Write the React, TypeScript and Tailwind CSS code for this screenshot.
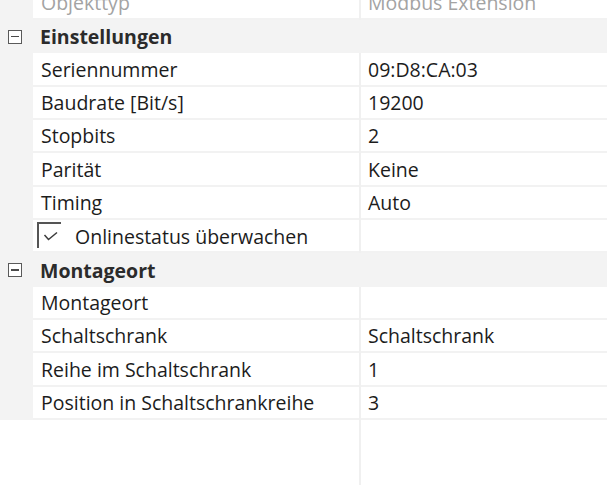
type Row =
  | { kind: 'category'; title: string }
  | { kind: 'prop'; label: string; value?: string; muted?: boolean }
  | { kind: 'check'; label: string }

const rows: Row[] = [
  { kind: 'prop', label: 'Objekttyp', value: 'Modbus Extension', muted: true },
  { kind: 'category', title: 'Einstellungen' },
  { kind: 'prop', label: 'Seriennummer', value: '09:D8:CA:03' },
  { kind: 'prop', label: 'Baudrate [Bit/s]', value: '19200' },
  { kind: 'prop', label: 'Stopbits', value: '2' },
  { kind: 'prop', label: 'Parität', value: 'Keine' },
  { kind: 'prop', label: 'Timing', value: 'Auto' },
  { kind: 'check', label: 'Onlinestatus überwachen' },
  { kind: 'category', title: 'Montageort' },
  { kind: 'prop', label: 'Montageort', value: '' },
  { kind: 'prop', label: 'Schaltschrank', value: 'Schaltschrank' },
  { kind: 'prop', label: 'Reihe im Schaltschrank', value: '1' },
  { kind: 'prop', label: 'Position in Schaltschrankreihe', value: '3' },
]

function CollapseBox() {
  return (
    <span className="ml-[8px] flex h-[14px] w-[14px] items-center justify-center border-[1.5px] border-[#5a5a5a] bg-white">
      <span className="h-[1.5px] w-[8px] bg-[#4a4a4a]" />
    </span>
  )
}

function CategoryRow({ title }: { title: string }) {
  return (
    <div className="flex h-[33.333px] shrink-0 items-center bg-[#f3f3f3]">
      <CollapseBox />
      <span className="ml-[18px] pt-[1px] font-bold text-[#2b2b2b]">{title}</span>
    </div>
  )
}

function PropRow({ label, value, muted }: { label: string; value?: string; muted?: boolean }) {
  const color = muted ? 'text-[#a3a3a3]' : 'text-[#1c1c1c]'
  return (
    <div className="flex h-[33.333px] shrink-0">
      <div className="w-[33px] shrink-0 bg-[#f3f3f3]" />
      <div className={`flex w-[326px] shrink-0 items-center border-b-2 border-[#f2f2f2] pl-[8px] pt-[1px] ${color}`}>
        {label}
      </div>
      <div className="w-[2px] shrink-0 bg-[#f0f0f0]" />
      <div className={`flex flex-1 items-center border-b-2 border-[#f2f2f2] pl-[7px] pt-[1px] ${color}`}>
        {value}
      </div>
    </div>
  )
}

function CheckRow({ label }: { label: string }) {
  return (
    <div className="flex h-[33.333px] shrink-0">
      <div className="w-[33px] shrink-0 bg-[#f3f3f3]" />
      <div className="flex w-[326px] shrink-0 border-b-2 border-[#f2f2f2] pl-[4px] pt-[2px] text-[#1c1c1c]">
        <span className="relative h-[26px] w-[24px] shrink-0 border-l-2 border-t-2 border-[#555555]">
          <svg className="absolute left-[4px] top-[7px]" width="16" height="12" viewBox="0 0 16 12">
            <polyline points="1.5,4 5.5,8.5 14,1.5" fill="none" stroke="#3c3c3c" strokeWidth="1.5" />
          </svg>
        </span>
        <span className="ml-[14px] self-center pt-[1px]">{label}</span>
      </div>
      <div className="w-[2px] shrink-0 bg-[#f0f0f0]" />
      <div className="flex-1 border-b-2 border-[#f2f2f2]" />
    </div>
  )
}

export default function App() {
  return (
    <div
      className="h-[485px] w-[607px] overflow-hidden bg-white text-[19.5px] leading-none"
      style={{ fontFamily: '"Open Sans", "Noto Sans", sans-serif' }}
    >
      <div className="-mt-[13.333px] flex h-[498.333px] flex-col">
        {rows.map((row, i) => {
          if (row.kind === 'category') return <CategoryRow key={i} title={row.title} />
          if (row.kind === 'check') return <CheckRow key={i} label={row.label} />
          return <PropRow key={i} label={row.label} value={row.value} muted={row.muted} />
        })}
        <div className="flex flex-1">
          <div className="w-[359px] shrink-0" />
          <div className="w-[2px] shrink-0 bg-[#f0f0f0]" />
          <div className="flex-1" />
        </div>
      </div>
    </div>
  )
}
